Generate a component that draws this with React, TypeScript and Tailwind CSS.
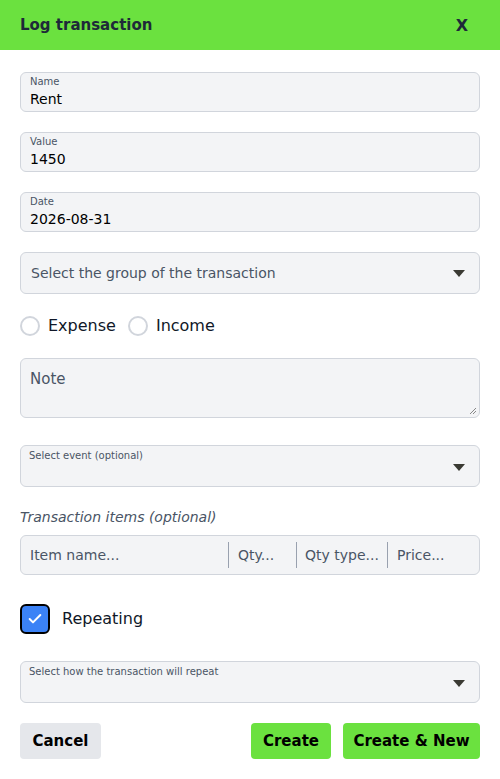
import { Check } from 'lucide-react';

const font = { fontFamily: '"DejaVu Sans", "Open Sans", sans-serif' };

function Caret() {
  return (
    <svg width="12" height="7" viewBox="0 0 12 7" className="shrink-0">
      <path d="M0 0h12L6 7z" fill="#3a3a33" />
    </svg>
  );
}

function LabeledInput({ label, value }: { label: string; value: string }) {
  return (
    <div className="h-10 rounded-md border border-gray-300 bg-gray-100 px-[9px] pt-[2px]">
      <div className="text-[10px] leading-[14px] text-gray-600">{label}</div>
      <div className="text-[14px] leading-[20px] text-black">{value}</div>
    </div>
  );
}

function LabeledSelect({ label }: { label: string }) {
  return (
    <div className="flex h-[42px] items-center justify-between rounded-md border border-gray-300 bg-gray-100 pl-[8px] pr-[14px]">
      <div className="self-start pt-[3px] text-[10px] leading-[14px] text-gray-600">{label}</div>
      <div className="pt-[2px]">
        <Caret />
      </div>
    </div>
  );
}

export default function App() {
  return (
    <div className="h-[779px] w-[500px] bg-white" style={font}>
      <div className="flex h-[50px] items-center justify-between bg-[#6be13f] px-5 pt-[1px]">
        <span className="text-[15px] font-bold text-gray-800">Log transaction</span>
        <span className="pr-[12px] text-[16px] font-bold text-gray-800">X</span>
      </div>

      <div className="flex flex-col px-5 pt-[22px]">
        <div className="flex flex-col gap-5">
          <LabeledInput label="Name" value="Rent" />
          <LabeledInput label="Value" value="1450" />
          <LabeledInput label="Date" value="2026-08-31" />
          <div className="flex h-[42px] items-center justify-between rounded-md border border-gray-300 bg-gray-100 pl-[10px] pr-[14px]">
            <span className="text-[14px] text-gray-600">Select the group of the transaction</span>
            <Caret />
          </div>
        </div>

        <div className="mt-[21px] flex h-[22px] items-center text-[16px] text-gray-900">
          <span className="h-5 w-5 rounded-full border-2 border-gray-300 bg-white" />
          <span className="ml-2">Expense</span>
          <span className="ml-3 h-5 w-5 rounded-full border-2 border-gray-300 bg-white" />
          <span className="ml-2">Income</span>
        </div>

        <div className="relative mt-[21px] h-[60px] rounded-md border border-gray-300 bg-gray-100 px-[9px] pt-[8px]">
          <span className="text-[15px] text-gray-600">Note</span>
          <svg width="8" height="8" viewBox="0 0 8 8" className="absolute bottom-[2px] right-[2px]">
            <path d="M1 7L7 1M4 7L7 4" stroke="#888" strokeWidth="1" />
          </svg>
        </div>

        <div className="mt-[27px]">
          <LabeledSelect label="Select event (optional)" />
        </div>

        <div className="mt-[20px] text-[14px] italic leading-5 text-gray-600">Transaction items (optional)</div>

        <div className="mt-[8px] flex h-10 items-center rounded-md border border-gray-300 bg-gray-100 text-[14px] text-gray-600">
          <span className="w-[208px] border-r border-gray-400 pl-[9px] leading-[26px]">Item name...</span>
          <span className="w-[68px] border-r border-gray-400 pl-[9px] leading-[26px]">Qty...</span>
          <span className="w-[91px] border-r border-gray-400 pl-[8px] leading-[26px]">Qty type...</span>
          <span className="flex-1 pl-[9px] leading-[26px]">Price...</span>
        </div>

        <div className="mt-[29px] flex items-center gap-3">
          <span className="flex h-[30px] w-[30px] items-center justify-center rounded-md border-2 border-black bg-[#3b82f6]">
            <Check className="h-4 w-4 text-white" strokeWidth={3} />
          </span>
          <span className="text-[16px] text-gray-900">Repeating</span>
        </div>

        <div className="mt-[27px]">
          <LabeledSelect label="Select how the transaction will repeat" />
        </div>

        <div className="mt-[20px] flex items-center">
          <button className="h-[36px] w-[81px] rounded-sm bg-gray-200 text-[15px] font-bold text-black">Cancel</button>
          <div className="flex-1" />
          <button className="h-[36px] w-[80px] rounded-sm bg-[#6be13f] text-[15px] font-bold text-black">Create</button>
          <button className="ml-3 h-[36px] w-[137px] rounded-sm bg-[#6be13f] text-[15px] font-bold text-black">Create &amp; New</button>
        </div>
      </div>
    </div>
  );
}
